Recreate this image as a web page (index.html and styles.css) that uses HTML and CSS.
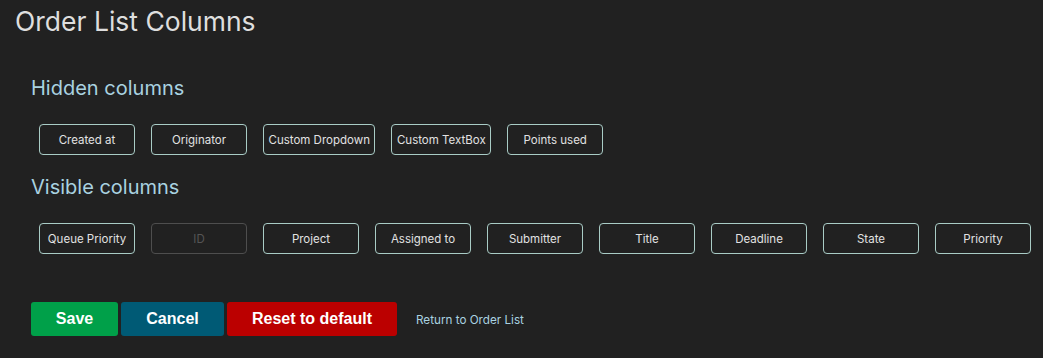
FILE: index.html
```html
<!DOCTYPE html>
<html>
<head>
<meta charset="utf-8">
<link rel="stylesheet" href="styles.css">
</head>
<body>
<h1 class="page-title">Order List Columns</h1>
<div class="content">
  <section class="group">
    <h2 class="group-title">Hidden columns</h2>
    <div class="chips">
      <button class="chip">Created at</button>
      <button class="chip">Originator</button>
      <button class="chip">Custom Dropdown</button>
      <button class="chip">Custom TextBox</button>
      <button class="chip">Points used</button>
    </div>
  </section>
  <section class="group">
    <h2 class="group-title">Visible columns</h2>
    <div class="chips">
      <button class="chip">Queue Priority</button>
      <button class="chip chip-disabled">ID</button>
      <button class="chip">Project</button>
      <button class="chip">Assigned to</button>
      <button class="chip">Submitter</button>
      <button class="chip">Title</button>
      <button class="chip">Deadline</button>
      <button class="chip">State</button>
      <button class="chip">Priority</button>
    </div>
  </section>
  <div class="actions">
    <button class="btn btn-save">Save</button>
    <button class="btn btn-cancel">Cancel</button>
    <button class="btn btn-reset">Reset to default</button>
    <a class="return-link" href="#">Return to Order List</a>
  </div>
</div>
</body>
</html>
```
FILE: styles.css
```css
html, body {
  margin: 0;
  padding: 0;
  background: #212121;
  height: 100%;
}
body {
  font-family: "Inter", "Open Sans", sans-serif;
  color: #dcdcdc;
}
.page-title {
  margin: 0;
  padding: 5px 0 0 15px;
  font-size: 26.5px;
  font-weight: 400;
  line-height: 32px;
  color: #dedede;
}
.content {
  padding: 39px 0 0 31px;
}
.group-title {
  margin: 0;
  font-size: 20px;
  font-weight: 400;
  line-height: 24px;
  color: #a9d2e0;
}
.chips {
  display: flex;
  gap: 16px;
  padding: 24px 0 0 8px;
}
.group + .group {
  margin-top: 20px;
}
.chip {
  min-width: 96px;
  height: 31px;
  padding: 0 4.5px;
  background: transparent;
  border: 1px solid #a9ccc6;
  border-radius: 4px;
  color: #e2e2e2;
  font-family: "Inter", "Open Sans", sans-serif;
  font-size: 11.5px;
  box-sizing: border-box;
}
.chip-disabled {
  border-color: #4e4e4e;
  color: #555;
}
.actions {
  display: flex;
  align-items: center;
  gap: 3px;
  margin-top: 48px;
}
.btn {
  height: 34px;
  border: none;
  border-radius: 3px;
  color: #fff;
  font-family: "Liberation Sans", Arial, sans-serif;
  font-weight: 700;
  font-size: 16px;
  padding: 0;
}
.btn-save {
  background: #00a049;
  width: 87px;
}
.btn-cancel {
  background: #005a75;
  width: 103px;
}
.btn-reset {
  background: #bb0000;
  width: 170px;
}
.return-link {
  margin-left: 16px;
  font-size: 11.7px;
  color: #a9d2e0;
  text-decoration: none;
  padding-top: 2px;
}
```
